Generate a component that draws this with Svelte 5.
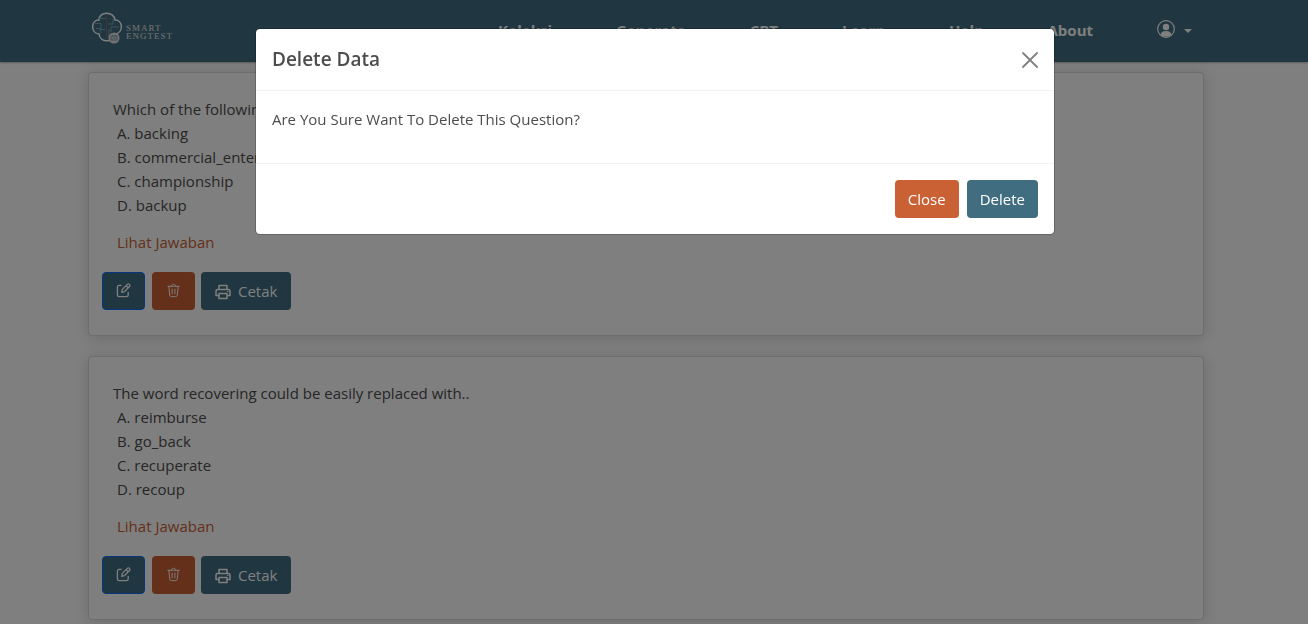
<script>
  const links = ['Koleksi', 'Generate', 'CBT', 'Learn', 'Help', 'About'];
  const questions = [
    {
      text: 'Which of the following',
      options: ['backing', 'commercial_enterprise', 'championship', 'backup']
    },
    {
      text: 'The word recovering could be easily replaced with..',
      options: ['reimburse', 'go_back', 'recuperate', 'recoup']
    }
  ];
  let open = $state(true);
</script>

<header class="navbar">
  <div class="container bar">
    <a class="brand" href="#home" aria-label="Smart Engtest">
      <svg width="32" height="34" viewBox="0 0 32 34" fill="none">
        <path d="M8 9C8 0 23 0 24 9C32 9 33 22 24 23C23 32 9 32 8 23C-1 22 0 9 8 9Z" stroke="#fff" stroke-width="1.500" />
        <path d="M8 7.500h6.500M4 12.500h6v5H5M9 22.500v-4h5M22 8v5h-5M28 16h-8v5M18 18v9" stroke="#80a4b2" stroke-width="1" />
        <path d="M15.500 4v24" stroke="#8a6a62" stroke-width="1" />
        <circle cx="23" cy="27" r="5.500" fill="#e5e5e5" />
        <path d="M20 25h6v4h-6zM21.500 24v1M24.500 24v1M21.500 27h3" stroke="#7296a4" stroke-width="1" />
      </svg>
      <span class="wordmark"><span>SMART</span><span>ENGTEST</span></span>
    </a>
    <nav>
      {#each links as link}
        <a href="#{link}">{link}</a>
      {/each}
      <button class="account" aria-label="Account">
        <svg width="18" height="18" viewBox="0 0 18 18">
          <circle cx="9" cy="9" r="8.300" fill="none" stroke="#fff" stroke-width="1.200" />
          <circle cx="9" cy="7" r="3.200" fill="#fff" />
          <path d="M3.500 14.500C4 12 6 11 9 11s5 1 5.500 3.500C12 17.500 6 17.500 3.500 14.500Z" fill="#fff" />
        </svg>
        <span class="caret"></span>
      </button>
    </nav>
  </div>
</header>

<main class="container">
  {#each questions as q}
    <article class="card">
      <p class="question">{q.text}</p>
      <div class="options">
        {#each q.options as option, i}
          <p>{'ABCD'[i]}. {option}</p>
        {/each}
        <a class="answer" href="#answer">Lihat Jawaban</a>
      </div>
      <div class="actions">
        <button class="btn edit" aria-label="Edit">
          <svg width="15" height="15" viewBox="0 0 16 16" fill="none" stroke="#fff" stroke-width="1.400" stroke-linecap="round" stroke-linejoin="round">
            <path d="M5.500 2.500H3.500a2 2 0 0 0-2 2v8a2 2 0 0 0 2 2H11a2 2 0 0 0 2-2V10" />
            <path d="M6 10l.8-3.200 5.300-5.300a1.600 1.600 0 0 1 2.300 2.300L9.200 9.100zM10.800 2.800l2.300 2.300" />
          </svg>
        </button>
        <button class="btn orange" aria-label="Delete">
          <svg width="15" height="15" viewBox="0 0 16 16" fill="none" stroke="#fff" stroke-linecap="round" stroke-linejoin="round">
            <path d="M2 3.500h12M5.500 3.500c0-3 5-3 5 0M3 3.500l1 9.500q.2 1.500 1.700 1.500h4.600q1.500 0 1.700-1.500l1-9.500M6.500 6.500v5M9.500 6.500v5" />
          </svg>
        </button>
        <button class="btn teal print">
          <svg width="16" height="16" viewBox="0 0 16 16" fill="none" stroke="#fff" stroke-width="1.500" stroke-linejoin="round">
            <path d="M4 5.500V1.500h8v4M4 11.500H1V7q0-1.500 1.500-1.500h11Q15 5.500 15 7v4.500h-3M4 9.500h8v5H4z" />
            <path d="M12 7.500h1.500" stroke-width="1" />
          </svg>
          Cetak
        </button>
      </div>
    </article>
  {/each}
</main>

{#if open}
  <div class="backdrop">
    <div class="modal" role="dialog" aria-modal="true" aria-labelledby="modal-title">
      <div class="modal-header">
        <h5 id="modal-title">Delete Data</h5>
        <button class="close" aria-label="Close" onclick={() => (open = false)}>
          <svg width="16" height="16" viewBox="0 0 16 16" stroke="#808080" stroke-width="1.800" stroke-linecap="round">
            <path d="M1 1l14 14M15 1L1 15" />
          </svg>
        </button>
      </div>
      <div class="modal-body"><p>Are You Sure Want To Delete This Question?</p></div>
      <div class="modal-footer">
        <button class="btn orange" onclick={() => (open = false)}>Close</button>
        <button class="btn teal" onclick={() => (open = false)}>Delete</button>
      </div>
    </div>
  </div>
{/if}

<style>
  :global(body) {
    margin: 0;
    padding-right: 16px;
    overflow: hidden;
    background: #fff;
    color: #4d4d4d;
    font: 15px/24px "Segoe UI", "Open Sans", "Noto Sans", sans-serif;
  }
  * { box-sizing: border-box; }
  p, h5 { margin: 0; }
  a { text-decoration: none; }
  button { font: inherit; }
  svg { display: block; flex: none; }

  .container {
    max-width: 1140px;
    margin: 0 auto;
    padding: 0 12px;
  }
  .navbar {
    margin-right: -16px;
    padding-right: 16px;
    background: #406d80;
    box-shadow: 0 1px 2px rgba(0, 0, 0, 0.3);
  }
  .bar {
    display: flex;
    align-items: center;
    justify-content: space-between;
    height: 62px;
    padding: 0 24px 0 15px;
  }
  .brand {
    display: flex;
    align-items: center;
    gap: 3px;
    margin-bottom: 6px;
    color: #e6e6e6;
    font: 9px/8px "Liberation Serif", serif;
    letter-spacing: 1px;
  }
  .wordmark { display: grid; padding-top: 8px; }
  nav { display: flex; align-items: center; gap: 64px; }
  nav a { margin-bottom: 2px; color: #fff; font-weight: 700; }
  .account {
    display: flex;
    align-items: center;
    gap: 9px;
    margin-bottom: 5px;
    padding: 0;
    border: 0;
    background: none;
  }
  .caret {
    margin-top: 5px;
    border: 4px solid transparent;
    border-top-color: #fff;
    border-bottom: 0;
  }

  .card {
    margin: 10px 0 20px;
    padding: 24px 24px 25px;
    border: 1px solid rgba(0, 0, 0, 0.14);
    border-radius: 4px;
    background: #fff;
    box-shadow: 0 2px 16px rgba(0, 0, 0, 0.16);
  }
  .options { padding-left: 4px; }
  .answer { display: block; margin-top: 13px; color: #c96135; }
  .actions {
    display: flex;
    gap: 6px;
    margin: 18px 0 0 -11px;
  }
  .btn {
    display: flex;
    align-items: center;
    justify-content: center;
    gap: 7px;
    height: 38px;
    padding: 0 13px;
    border: 0;
    border-radius: 4px;
    color: #fff;
  }
  .edit { margin-right: 1px; border: 1px solid #0d6efd; background: #406d80; }
  .actions .btn { min-width: 43px; }
  .actions .btn svg { margin-bottom: 2px; }
  .actions .print { padding: 0 14px; }
  .actions .print svg { margin: 2px 0 0; }
  .orange { background: #c96135; }
  .teal { background: #406d80; }

  .backdrop {
    position: fixed;
    inset: 0;
    padding: 28px 0 0 2px;
    background: rgba(0, 0, 0, 0.5);
  }
  .modal {
    max-width: 800px;
    margin: 0 auto;
    border: 1px solid rgba(0, 0, 0, 0.2);
    border-radius: 5px;
    background: #fff;
    background-clip: padding-box;
  }
  .modal-header {
    display: flex;
    align-items: center;
    justify-content: space-between;
    padding: 16px;
    border-bottom: 1px solid #f3f3f3;
  }
  h5 { font-size: 19px; line-height: 29px; font-weight: 600; }
  .close { padding: 0; border: 0; background: none; }
  .modal-body { padding: 16px 16px 32px; }
  .modal-footer {
    display: flex;
    justify-content: flex-end;
    gap: 8px;
    padding: 16px;
    border-top: 1px solid #f3f3f3;
  }
</style>
